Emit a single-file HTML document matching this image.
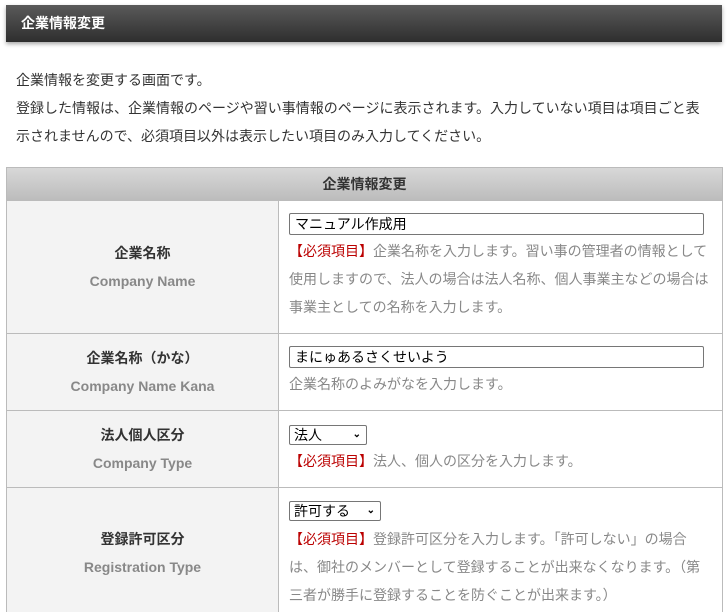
<!DOCTYPE html>
<html><head><meta charset="utf-8"><style>
html,body{margin:0;height:612px;overflow:hidden}
body{width:728px;background:#fff;font-family:"Liberation Sans","Noto Sans CJK JP",sans-serif;font-size:14px;color:#333;position:relative}
.hd{position:absolute;left:6px;top:5px;width:716px;height:37px;background:linear-gradient(#5a5a5a,#2e2e2e);box-shadow:0 2px 4px rgba(0,0,0,.35);color:#fff;font-weight:bold;line-height:37px;text-indent:15px}
.intro{position:absolute;left:16px;top:66px;line-height:28px;color:#333}
.tbl{position:absolute;left:6px;top:167px;width:715px;height:445px;border:1px solid #bbb;border-bottom:none;overflow:hidden}
.th{height:32px;background:linear-gradient(#d8d8d8,#bcbcbc);text-align:center;line-height:32px;font-weight:bold;border-bottom:1px solid #bbb}
.row{position:relative;border-bottom:1px solid #bbb}
.l{position:absolute;left:0;top:0;bottom:0;width:271px;background:#f3f3f3;border-right:1px solid #bbb;display:flex;flex-direction:column;justify-content:center;align-items:center;line-height:28px;font-weight:bold}
.l span{color:#888}
.c{position:absolute;left:282px}
.t{position:absolute;left:282px;line-height:28px;color:#888;white-space:nowrap}
.red{color:#b00}
.inp{width:408px;height:20px;border:1px solid #767676;border-radius:2px;color:#000;line-height:20px;padding-left:5px}
.sel{height:18px;border:1px solid #767676;border-radius:2px;color:#000;line-height:18px;padding-left:4px;position:relative}
.sel b{position:absolute;right:5px;top:0;font-size:10px}
</style></head><body>
<div class="hd">企業情報変更</div>
<div class="intro">企業情報を変更する画面です。<br>登録した情報は、企業情報のページや習い事情報のページに表示されます。入力していない項目は項目ごと表<br>示されませんので、必須項目以外は表示したい項目のみ入力してください。</div>
<div class="tbl">
<div class="th">企業情報変更</div>
<div class="row" style="height:132px">
<div class="l">企業名称<span>Company Name</span></div>
<div class="c" style="top:12px"><div class="inp">マニュアル作成用</div></div>
<div class="t" style="top:36px"><span class="red">【必須項目】</span>企業名称を入力します。習い事の管理者の情報として<br>使用しますので、法人の場合は法人名称、個人事業主などの場合は<br>事業主としての名称を入力します。</div>
</div>
<div class="row" style="height:76px">
<div class="l">企業名称（かな）<span>Company Name Kana</span></div>
<div class="c" style="top:12px"><div class="inp">まにゅあるさくせいよう</div></div>
<div class="t" style="top:36px">企業名称のよみがなを入力します。</div>
</div>
<div class="row" style="height:76px">
<div class="l">法人個人区分<span>Company Type</span></div>
<div class="c" style="top:14px"><div class="sel" style="width:72px">法人<b>⌄</b></div></div>
<div class="t" style="top:36px"><span class="red">【必須項目】</span>法人、個人の区分を入力します。</div>
</div>
<div class="row" style="height:124px;border-bottom:none">
<div class="l" style="justify-content:flex-start;padding-top:37px">登録許可区分<span>Registration Type</span></div>
<div class="c" style="top:13px"><div class="sel" style="width:86px">許可する<b>⌄</b></div></div>
<div class="t" style="top:37px"><span class="red">【必須項目】</span>登録許可区分を入力します。「許可しない」の場合<br>は、御社のメンバーとして登録することが出来なくなります。（第<br>三者が勝手に登録することを防ぐことが出来ます。）</div>
</div>
</div>
</body></html>
